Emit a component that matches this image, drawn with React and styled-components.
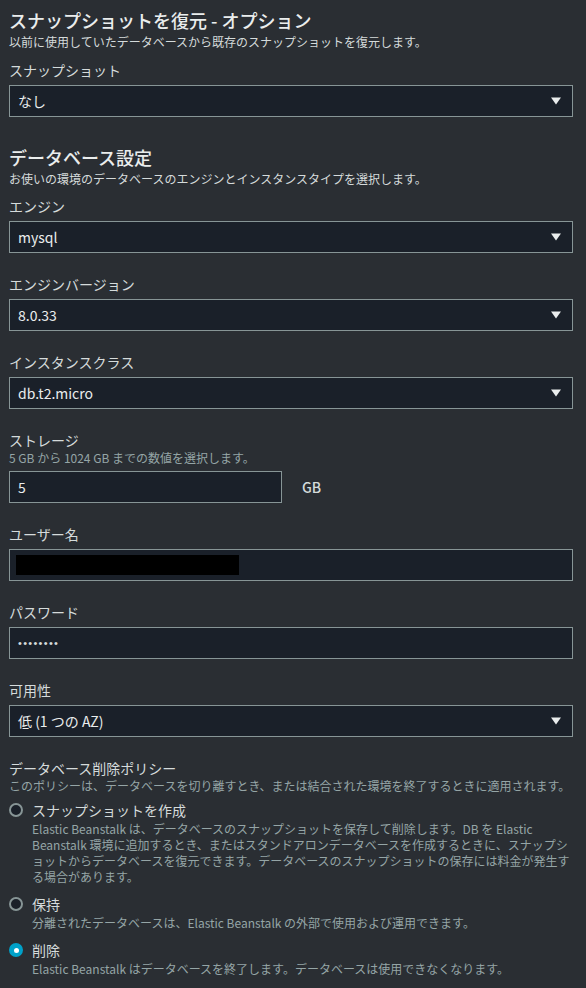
import React from 'react';
import styled, {createGlobalStyle} from 'styled-components';

const GlobalStyle = createGlobalStyle`
    html, body {
        margin: 0;
        padding: 0;
        background: #2a2e33;
    }
    body {
        font-family: "Noto Sans CJK JP", "Noto Sans", sans-serif;
        color: #d5dbdb;
        -webkit-font-smoothing: antialiased;
    }
`;

const Page = styled.div`
    padding: 9px 13px 12px 9px;
    display: flex;
    flex-direction: column;
`;

const Section = styled.section`
    display: flex;
    flex-direction: column;
    & + & {
        margin-top: 29px;
    }
`;

const Title = styled.h2`
    margin: 0;
    font-size: 18px;
    line-height: 22px;
    font-weight: 500;
    color: #eaeded;
`;

const Subtitle = styled.p`
    margin: 3px 0 0;
    font-size: 12px;
    line-height: 16px;
    color: #d5dbdb;
`;

const Fields = styled.div`
    display: flex;
    flex-direction: column;
    gap: 21px;
    margin-top: ${({$offset}) => $offset}px;
`;

const Field = styled.div`
    display: flex;
    flex-direction: column;
`;

const Label = styled.div`
    font-size: 14px;
    line-height: 20px;
    color: #d5dbdb;
`;

const Hint = styled.div`
    font-size: 12px;
    line-height: 16px;
    color: #95a5a6;
`;

const Control = styled.div`
    margin-top: 5px;
`;

const Box = styled.div`
    box-sizing: border-box;
    height: 32px;
    width: ${({$width}) => ($width ? `${$width}px` : '100%')};
    display: flex;
    align-items: center;
    justify-content: space-between;
    padding: 0 8px 0 8px;
    background: #1a2029;
    border: 1px solid #879596;
    font-size: 14px;
    color: #eaeded;
`;

const Caret = () => (
    <svg width="16" height="16" viewBox="0 0 16 16">
        <polygon points="3,4.5 13,4.5 8,11.5" fill="#eaeded" />
    </svg>
);

const Select = ({value}) => (
    <Box>
        <span>{value}</span>
        <Caret />
    </Box>
);

const Row = styled.div`
    display: flex;
    align-items: center;
    gap: 20px;
`;

const Unit = styled.span`
    font-size: 14px;
    font-weight: 500;
    color: #d5dbdb;
`;

const Redacted = styled.div`
    width: 223px;
    height: 20px;
    margin-left: -2px;
    background: #000;
`;

const Dots = styled.span`
    font-family: "Liberation Sans", sans-serif;
    font-size: 11px;
    letter-spacing: 1.3px;
    color: #d5dbdb;
`;

const RadioList = styled.div`
    display: flex;
    flex-direction: column;
    gap: 9px;
    margin-top: 6px;
`;

const RadioItem = styled.div`
    display: flex;
    flex-direction: column;
`;

const RadioHead = styled.div`
    display: flex;
    align-items: center;
    gap: 9px;
    font-size: 14px;
    line-height: 20px;
    color: #d5dbdb;
`;

const Circle = styled.span`
    box-sizing: border-box;
    width: 14px;
    height: 14px;
    border-radius: 50%;
    flex-shrink: 0;
    display: flex;
    align-items: center;
    justify-content: center;
    background: ${({$checked}) => ($checked ? '#00a1c9' : '#1a2029')};
    border: 2px solid ${({$checked}) => ($checked ? '#00a1c9' : '#879596')};
    &::after {
        content: '';
        display: ${({$checked}) => ($checked ? 'block' : 'none')};
        width: 5px;
        height: 5px;
        border-radius: 50%;
        background: #fff;
    }
`;

const RadioDesc = styled.div`
    margin-top: 1px;
    padding-left: 23px;
    font-size: 12px;
    line-height: 16px;
    color: #95a5a6;
    white-space: nowrap;
`;

const policies = [
    {
        label: 'スナップショットを作成',
        lines: [
            'Elastic Beanstalk は、データベースのスナップショットを保存して削除します。DB を Elastic',
            'Beanstalk 環境に追加するとき、またはスタンドアロンデータベースを作成するときに、スナップシ',
            'ョットからデータベースを復元できます。データベースのスナップショットの保存には料金が発生す',
            'る場合があります。',
        ],
    },
    {
        label: '保持',
        lines: ['分離されたデータベースは、Elastic Beanstalk の外部で使用および運用できます。'],
    },
    {
        label: '削除',
        lines: ['Elastic Beanstalk はデータベースを終了します。データベースは使用できなくなります。'],
        checked: true,
    },
];

const App = () => (
    <>
        <GlobalStyle />
        <Page>
            <Section>
                <Title>スナップショットを復元 - オプション</Title>
                <Subtitle>以前に使用していたデータベースから既存のスナップショットを復元します。</Subtitle>
                <Fields $offset={10}>
                    <Field>
                        <Label>スナップショット</Label>
                        <Control>
                            <Select value="なし" />
                        </Control>
                    </Field>
                </Fields>
            </Section>

            <Section>
                <Title>データベース設定</Title>
                <Subtitle>お使いの環境のデータベースのエンジンとインスタンスタイプを選択します。</Subtitle>
                <Fields $offset={9}>
                    <Field>
                        <Label>エンジン</Label>
                        <Control>
                            <Select value="mysql" />
                        </Control>
                    </Field>
                    <Field>
                        <Label>エンジンバージョン</Label>
                        <Control>
                            <Select value="8.0.33" />
                        </Control>
                    </Field>
                    <Field>
                        <Label>インスタンスクラス</Label>
                        <Control>
                            <Select value="db.t2.micro" />
                        </Control>
                    </Field>
                    <Field>
                        <Label>ストレージ</Label>
                        <Hint>5 GB から 1024 GB までの数値を選択します。</Hint>
                        <Control>
                            <Row>
                                <Box $width={273}>
                                    <span>5</span>
                                </Box>
                                <Unit>GB</Unit>
                            </Row>
                        </Control>
                    </Field>
                    <Field>
                        <Label>ユーザー名</Label>
                        <Control>
                            <Box>
                                <Redacted />
                            </Box>
                        </Control>
                    </Field>
                    <Field>
                        <Label>パスワード</Label>
                        <Control>
                            <Box>
                                <Dots>••••••••</Dots>
                            </Box>
                        </Control>
                    </Field>
                    <Field>
                        <Label>可用性</Label>
                        <Control>
                            <Select value="低 (1 つの AZ)" />
                        </Control>
                    </Field>
                    <Field>
                        <Label>データベース削除ポリシー</Label>
                        <Hint>このポリシーは、データベースを切り離すとき、または結合された環境を終了するときに適用されます。</Hint>
                        <RadioList>
                            {policies.map(p => (
                                <RadioItem key={p.label}>
                                    <RadioHead>
                                        <Circle $checked={p.checked} />
                                        {p.label}
                                    </RadioHead>
                                    <RadioDesc>
                                        {p.lines.map((line, i) => (
                                            <div key={i}>{line}</div>
                                        ))}
                                    </RadioDesc>
                                </RadioItem>
                            ))}
                        </RadioList>
                    </Field>
                </Fields>
            </Section>
        </Page>
    </>
);

export default App;
